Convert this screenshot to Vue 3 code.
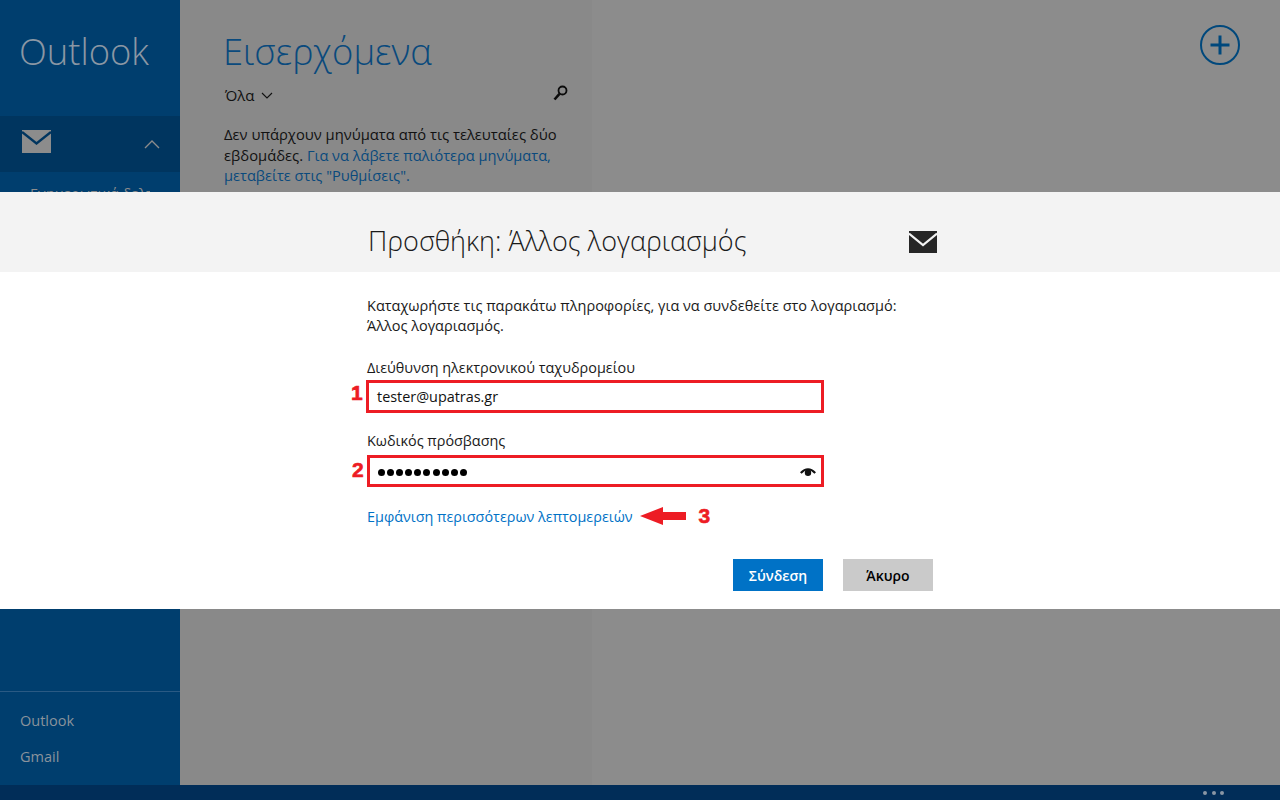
<script setup>
const dots = Array.from({ length: 10 })
</script>

<template>
  <div class="screen">
    <div class="main">
      <aside class="sidebar">
        <div class="brand">Outlook</div>
        <div class="mail-row">
          <svg class="mail-icon" width="29" height="23" viewBox="0 0 29 23">
            <path d="M0 0H29V23H0Z" fill="#8c8c8c" />
            <path d="M0 2 L14.5 13.5 L29 2" fill="none" stroke="#00355f" stroke-width="2.4" />
          </svg>
          <svg class="chevron-up" width="16" height="10" viewBox="0 0 16 10">
            <path d="M1 9 L8 2 L15 9" fill="none" stroke="#8c8c8c" stroke-width="1.4" />
          </svg>
        </div>
        <div class="folder">Ενημερωτικά δελτία</div>
        <div class="spacer"></div>
        <div class="accounts">
          <div class="account">Outlook</div>
          <div class="account">Gmail</div>
        </div>
      </aside>
      <section class="list">
        <h1 class="inbox">Εισερχόμενα</h1>
        <div class="filter-row">
          <span class="filter">
            Όλα
            <svg width="12" height="7" viewBox="0 0 12 7">
              <path d="M1 1 L6 6 L11 1" fill="none" stroke="#111" stroke-width="1.1" />
            </svg>
          </span>
          <svg class="search" width="15" height="16" viewBox="0 0 15 16">
            <circle cx="9.5" cy="5.5" r="4" fill="none" stroke="#0b0b0b" stroke-width="1.8" />
            <path d="M6.5 8.8 L1.5 14.5" stroke="#0b0b0b" stroke-width="2.6" />
          </svg>
        </div>
        <p class="empty">
          Δεν υπάρχουν μηνύματα από τις τελευταίες δύο εβδομάδες.
          <span class="link-dim">Για να λάβετε παλιότερα μηνύματα, μεταβείτε στις "Ρυθμίσεις".</span>
        </p>
      </section>
      <section class="reading">
        <svg class="add" width="40" height="40" viewBox="0 0 40 40">
          <circle cx="20" cy="20" r="19" fill="none" stroke="#00487c" stroke-width="2" />
          <path d="M20 10.5 V29.5 M10.5 20 H29.5" stroke="#00487c" stroke-width="3" />
        </svg>
      </section>
    </div>
    <div class="appbar">
      <span class="dot"></span><span class="dot"></span><span class="dot"></span>
    </div>

    <div class="dialog">
      <header class="dialog-head">
        <div class="head-inner">
          <h2>Προσθήκη: Άλλος λογαριασμός</h2>
          <svg width="28" height="22" viewBox="0 0 28 22">
            <path d="M0 0H28V22H0Z" fill="#262626" />
            <path d="M0 2.5 L14 14 L28 2.5" fill="none" stroke="#f3f3f3" stroke-width="2.2" />
          </svg>
        </div>
      </header>
      <div class="dialog-body">
        <p class="intro">Καταχωρήστε τις παρακάτω πληροφορίες, για να συνδεθείτε στο λογαριασμό:<br />Άλλος λογαριασμός.</p>

        <label class="label first">Διεύθυνση ηλεκτρονικού ταχυδρομείου</label>
        <div class="field field-email">
          <span class="mark mark-1">1</span>
          <span class="value">tester@upatras.gr</span>
        </div>

        <label class="label second">Κωδικός πρόσβασης</label>
        <div class="field field-password">
          <span class="mark mark-2">2</span>
          <span class="pw"><i v-for="(d, i) in dots" :key="i"></i></span>
          <svg class="eye" width="16" height="10" viewBox="0 0 16 10">
            <path d="M0.8 6 Q8 -1.5 15.2 6" fill="none" stroke="#111" stroke-width="2.2" />
            <circle cx="8" cy="5.8" r="3.2" fill="#111" />
          </svg>
        </div>

        <div class="more-row">
          <a class="more">Εμφάνιση περισσότερων λεπτομερειών</a>
          <svg class="arrow" width="46" height="18" viewBox="0 0 46 18">
            <path d="M0 9 L23 0 V5 H46 V13 H23 V18 Z" fill="#ed1c24" />
          </svg>
          <span class="mark-3">3</span>
        </div>

        <div class="actions">
          <button class="btn primary">Σύνδεση</button>
          <button class="btn secondary">Άκυρο</button>
        </div>
      </div>
    </div>
  </div>
</template>

<style>
html, body { margin: 0; padding: 0; }
</style>

<style scoped>
.screen {
  position: relative;
  width: 1280px;
  height: 800px;
  overflow: hidden;
  display: flex;
  flex-direction: column;
  font-family: "Open Sans", "Noto Sans", sans-serif;
  background: #8c8c8c;
}
.main { flex: 1; display: flex; min-height: 0; }
.sidebar {
  width: 180px;
  background: #003e6e;
  display: flex;
  flex-direction: column;
  color: #8c8c8c;
}
.brand { font-size: 36.4px; font-weight: 300; line-height: 50px; padding: 26px 0 0 19px; height: 88px; box-sizing: border-box; color: #8b97a4; }
.mail-row {
  margin-top: 28px;
  height: 56px;
  background: #00355f;
  display: flex;
  align-items: center;
  justify-content: space-between;
  padding: 0 20px 0 22px;
}
.mail-icon { margin-top: -5px; }
.chevron-up { margin-top: 0; }
.folder { padding: 12px 0 0 30px; width: 120px; height: 20px; overflow: hidden; white-space: nowrap; font-size: 14.5px; line-height: 20px; }
.spacer { flex: 1; }
.accounts { border-top: 1px solid #2a5a84; padding: 11px 0 10px 20px; }
.account { font-size: 14.5px; line-height: 36px; color: #8a939c; }
.list {
  width: 412px;
  box-sizing: border-box;
  background: #898989;
  padding: 27px 24px 0 43px;
}
.inbox { margin: 0; font-size: 36.4px; font-weight: 300; line-height: 48px; color: #0a4a7d; }
.filter-row { display: flex; justify-content: space-between; align-items: center; margin-top: 8px; height: 24px; padding-left: 1px; }
.filter { font-size: 15px; color: #111; display: inline-flex; align-items: center; gap: 6px; margin-left: 1px; }
.search { margin-top: -4px; }
.empty { margin: 17px 0 0 1px; font-size: 14.75px; line-height: 20.5px; color: #111; }
.link-dim { color: #0a4a7d; font-size: 14.6px; }
.reading { flex: 1; display: flex; justify-content: flex-end; align-items: flex-start; padding: 25px 40px 0 0; }
.appbar {
  height: 15px;
  background: #012d58;
  display: flex;
  justify-content: flex-end;
  align-items: center;
  gap: 4.5px;
  padding-right: 56px;
}
.dot { width: 4px; height: 4px; border-radius: 50%; background: #8a96a4; }

.dialog {
  position: absolute;
  left: 0;
  right: 0;
  top: 192px;
  height: 417px;
  background: #fff;
}
.dialog-head { height: 80px; background: #f3f3f3; }
.head-inner {
  margin-left: 368px;
  width: 569px;
  height: 100%;
  display: flex;
  justify-content: space-between;
  align-items: center;
  padding-top: 18px;
  padding-bottom: 1px;
  box-sizing: border-box;
}
.head-inner svg { margin-top: 2px; }
h2 { margin: 0; font-size: 27px; font-weight: 300; color: #1a1a1a; }
.dialog-body { padding: 24px 0 0 367px; width: 566px; font-size: 14.4px; color: #1a1a1a; }
.intro { margin: 0; font-size: 14.5px; line-height: 20px; }
.label { display: block; line-height: 20px; }
.label.first { margin-top: 22px; }
.label.second { margin-top: 18px; }
.field {
  position: relative;
  border: 3px solid #ed1c24;
  box-sizing: border-box;
  display: flex;
  align-items: center;
  padding: 0 8px;
}
.field-email { margin: 2px 0 0 -1px; width: 458px; height: 33px; }
.field-password { margin-top: 4px; width: 457px; height: 32px; }
.value { font-size: 14.4px; color: #111; }
.mark {
  position: absolute;
  font-family: "Liberation Sans", sans-serif;
  font-weight: 700;
  font-size: 21px;
  color: #ed1c24;
  line-height: 24px;
  -webkit-text-stroke: 0.6px #ed1c24;
}
.mark-1 { left: -18px; top: -2px; }
.mark-2 { left: -18px; top: 0; }
.pw { display: flex; gap: 2.1px; margin-top: 3px; }
.pw i { display: block; width: 7px; height: 7px; border-radius: 50%; background: #000; }
.eye { position: absolute; right: 5px; top: 9px; }
.more-row { display: flex; align-items: center; margin-top: 18px; height: 22px; }
.more { color: #0072c6; }
.arrow { margin-left: 7px; }
.mark-3 {
  margin-left: 13px;
  font-family: "Liberation Sans", sans-serif;
  font-weight: 700;
  font-size: 21px;
  color: #ed1c24;
  -webkit-text-stroke: 0.6px #ed1c24;
}
.actions { display: flex; justify-content: flex-end; gap: 20px; margin-top: 32px; }
.btn { width: 90px; height: 32px; border: 0; font-family: inherit; font-size: 14px; font-weight: 600; padding: 0; }
.primary { background: #0072c6; color: #fff; }
.secondary { background: #cacaca; color: #000; }
</style>
